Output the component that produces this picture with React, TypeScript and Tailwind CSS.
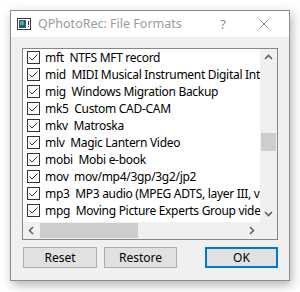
import React from "react";

const rows: [string, string][] = [
  ["mft", "NTFS MFT record"],
  ["mid", "MIDI Musical Instrument Digital Interface"],
  ["mig", "Windows Migration Backup"],
  ["mk5", "Custom CAD-CAM"],
  ["mkv", "Matroska"],
  ["mlv", "Magic Lantern Video"],
  ["mobi", "Mobi e-book"],
  ["mov", "mov/mp4/3gp/3g2/jp2"],
  ["mp3", "MP3 audio (MPEG ADTS, layer III, v1)"],
  ["mpg", "Moving Picture Experts Group video"],
];

function Check() {
  return (
    <svg width="13" height="13" viewBox="0 0 13 13" className="shrink-0">
      <rect x="0.5" y="0.5" width="12" height="12" fill="#fff" stroke="#333" />
      <polyline points="2.5,6.5 5,9 10.5,3.5" fill="none" stroke="#333" strokeWidth="1" />
    </svg>
  );
}

function Chevron({ dir }: { dir: "up" | "down" | "left" | "right" }) {
  const pts = {
    up: "1,6 4.5,2.5 8,6",
    down: "1,3 4.5,6.5 8,3",
    left: "6,1 2.5,4.5 6,8",
    right: "3,1 6.5,4.5 3,8",
  }[dir];
  return (
    <svg width="9" height="9" viewBox="0 0 9 9">
      <polyline points={pts} fill="none" stroke="#606060" strokeWidth="1.6" />
    </svg>
  );
}

export default function App() {
  const font = { fontFamily: '"Noto Sans", "Open Sans", sans-serif' };
  return (
    <div className="w-[300px] h-[292px] bg-white overflow-hidden" style={font}>
      <div className="ml-[10px] mt-[10px] w-[280px] h-[271px] border border-[#8c8c8c] bg-[#f0f0f0] flex flex-col shadow-[2px_4px_10px_rgba(0,0,0,0.3)]">
        {/* title bar */}
        <div className="h-[26px] bg-white flex items-center shrink-0">
          <div className="ml-[6px] w-[14px] h-[12px]">
            <svg width="14" height="12" viewBox="0 0 14 12">
              <rect x="0.5" y="0.5" width="13" height="11" fill="#fff" stroke="#3a3a3a" />
              <rect x="2" y="2" width="7" height="8" fill="#2c5d63" />
              <rect x="3" y="3" width="4" height="4" fill="#5aa0a6" />
              <rect x="11" y="3" width="1" height="4" fill="#333" />
              <rect x="11" y="8" width="1" height="1" fill="#333" />
            </svg>
          </div>
          <div className="ml-[7px] text-[12.5px] text-[#9a9a9a] leading-none">QPhotoRec: File Formats</div>
          <div className="ml-auto mr-[33px] text-[13px] text-[#8a8a8a] leading-none">?</div>
          <div className="mr-[20px] w-[10px] h-[10px]">
            <svg width="10" height="10" viewBox="0 0 10 10">
              <path d="M0.5 0.5 L9.5 9.5 M9.5 0.5 L0.5 9.5" stroke="#8a8a8a" strokeWidth="1" />
            </svg>
          </div>
        </div>
        {/* body */}
        <div className="flex-1 pl-[11px] pr-[11px] pt-[11px] flex flex-col">
          <div className="w-[256px] h-[192px] border border-[#828790] bg-white grid grid-cols-[1fr_17px] grid-rows-[1fr_17px]">
            <div className="overflow-hidden">
              {rows.map(([ext, desc]) => (
                <div key={ext} className="h-[17px] flex items-center pl-[4px] whitespace-pre">
                  <Check />
                  <span className="ml-[5px] text-[12px] text-black leading-none tracking-[-0.3px]">
                    {ext + "  " + desc}
                  </span>
                </div>
              ))}
            </div>
            <div className="bg-[#f0f0f0] flex flex-col">
              <div className="h-[17px] flex items-center justify-center"><Chevron dir="up" /></div>
              <div className="flex-1 flex flex-col px-[1px]">
                <div className="h-[67px]" />
                <div className="h-[18px] bg-[#cdcdcd]" />
              </div>
              <div className="h-[17px] flex items-center justify-center"><Chevron dir="down" /></div>
            </div>
            <div className="bg-[#f0f0f0] flex">
              <div className="w-[17px] flex items-center justify-center"><Chevron dir="left" /></div>
              <div className="flex-1 flex py-[1px]">
                <div className="w-[98px] bg-[#cdcdcd]" />
              </div>
              <div className="w-[17px] flex items-center justify-center"><Chevron dir="right" /></div>
            </div>
            <div className="bg-[#f0f0f0]" />
          </div>
          <div className="mt-[7px] flex w-[256px] pl-[1px]">
            <button className="w-[74px] h-[21px] bg-[#e1e1e1] border border-[#adadad] text-[12px] text-black leading-none">Reset</button>
            <button className="ml-[7px] w-[73px] h-[21px] bg-[#e1e1e1] border border-[#adadad] text-[12px] text-black leading-none">Restore</button>
            <button className="ml-auto w-[73px] h-[21px] bg-[#e1e1e1] border-2 border-[#0078d7] text-[12px] text-black leading-none">OK</button>
          </div>
        </div>
      </div>
    </div>
  );
}
